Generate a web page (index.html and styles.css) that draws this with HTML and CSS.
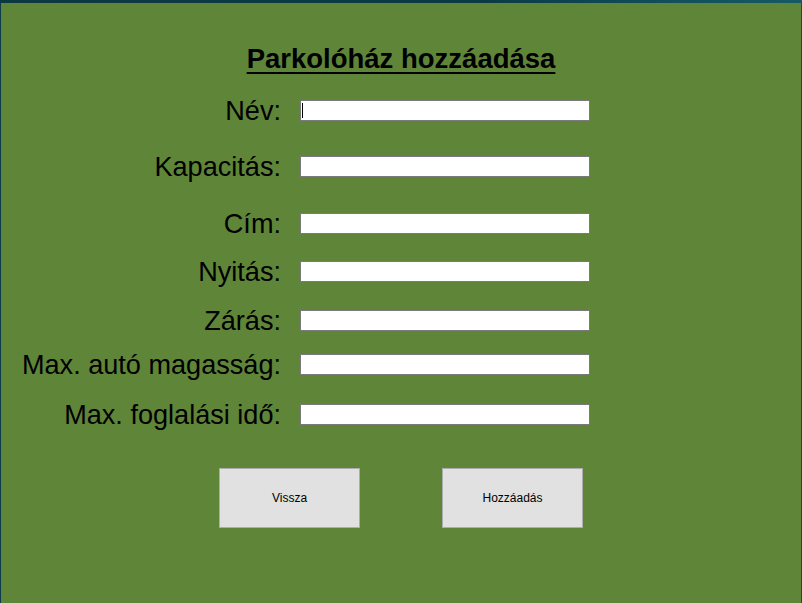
FILE: index.html
```html
<!DOCTYPE html>
<html lang="hu">
<head>
<meta charset="utf-8">
<title>Parkolóház hozzáadása</title>
<link rel="stylesheet" href="styles.css">
</head>
<body>
<div class="window">
  <h1 class="title">Parkolóház hozzáadása</h1>
  <div class="form">
    <div class="row r1">
      <label class="label">Név:</label>
      <span class="field-wrap"><input class="field" type="text"><span class="caret"></span></span>
    </div>
    <div class="row r2">
      <label class="label">Kapacitás:</label>
      <input class="field" type="text">
    </div>
    <div class="row r3">
      <label class="label">Cím:</label>
      <input class="field" type="text">
    </div>
    <div class="row r4">
      <label class="label">Nyitás:</label>
      <input class="field" type="text">
    </div>
    <div class="row r5">
      <label class="label">Zárás:</label>
      <input class="field" type="text">
    </div>
    <div class="row r6">
      <label class="label">Max. autó magasság:</label>
      <input class="field" type="text">
    </div>
    <div class="row r7">
      <label class="label">Max. foglalási idő:</label>
      <input class="field" type="text">
    </div>
  </div>
  <div class="buttons">
    <button class="btn" type="button">Vissza</button>
    <button class="btn" type="button">Hozzáadás</button>
  </div>
</div>
</body>
</html>
```
FILE: styles.css
```css
html, body {
  margin: 0;
  padding: 0;
  height: 100%;
}
body {
  background: #5f8538;
  font-family: "Liberation Sans", Arial, sans-serif;
  color: #000;
}
.window {
  box-sizing: border-box;
  height: 100vh;
  border-top: 3px solid #0c3a44;
  border-left: 1px solid #0d3d4a;
  border-right: 1px solid #1f4a3a;
  background: #5f8538;
  display: flex;
  flex-direction: column;
  position: relative;
}
.window::before {
  content: "";
  position: absolute;
  top: -3px;
  left: -1px;
  right: -1px;
  height: 3px;
  background: linear-gradient(90deg, #0b3841 0%, #0c3a44 60%, #11505c 85%, #155a66 100%);
}
.title {
  margin: 41px 0 0 0;
  font-size: 27.5px;
  font-weight: bold;
  line-height: 30.6px;
  text-align: center;
  text-decoration: underline;
  text-decoration-thickness: 2px;
  text-underline-offset: 4px;
}
.form {
  display: flex;
  flex-direction: column;
  margin-top: 25px;
}
.row {
  display: flex;
  align-items: center;
  column-gap: 19px;
  height: 21px;
}
.r2 { margin-top: 35px; }
.r3 { margin-top: 36px; }
.r4 { margin-top: 27px; }
.r5 { margin-top: 28px; }
.r6 { margin-top: 23px; }
.r7 { margin-top: 29px; }
.label {
  width: 280px;
  text-align: right;
  font-size: 27.1px;
  line-height: 21px;
  white-space: nowrap;
}
.field-wrap {
  position: relative;
  display: block;
  width: 290px;
  height: 21px;
}
.field {
  box-sizing: border-box;
  width: 290px;
  height: 21px;
  margin: 0;
  padding: 0 2px;
  border: 1px solid #7a7a7a;
  background: #fff;
  outline: none;
  font-family: "Liberation Sans", Arial, sans-serif;
  font-size: 13px;
}
.caret {
  position: absolute;
  left: 2px;
  top: 3px;
  width: 1px;
  height: 15px;
  background: #000;
}
.buttons {
  display: flex;
  justify-content: center;
  column-gap: 82px;
  margin-top: 43px;
  padding-left: 0;
}
.btn {
  box-sizing: border-box;
  width: 141px;
  height: 60px;
  margin: 0;
  padding: 0;
  background: #e1e1e1;
  border: 1px solid #adadad;
  font-family: "Liberation Sans", Arial, sans-serif;
  font-size: 12px;
  color: #000;
}
```
